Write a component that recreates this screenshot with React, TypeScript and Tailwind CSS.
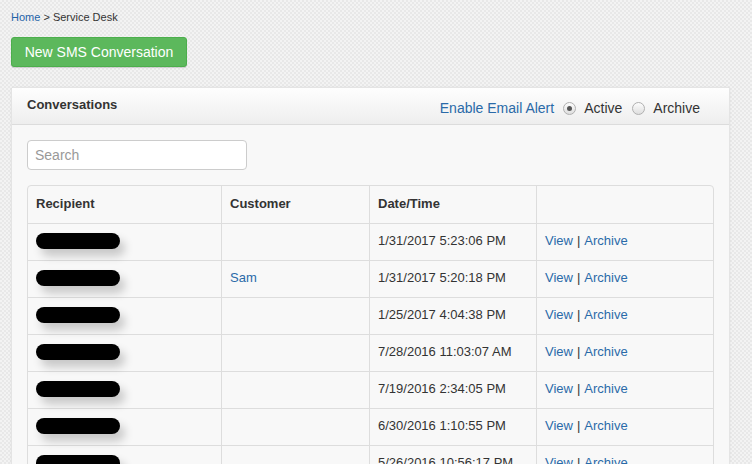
import React from "react";

const rows = [
  { customer: "", date: "1/31/2017 5:23:06 PM" },
  { customer: "Sam", date: "1/31/2017 5:20:18 PM" },
  { customer: "", date: "1/25/2017 4:04:38 PM" },
  { customer: "", date: "7/28/2016 11:03:07 AM" },
  { customer: "", date: "7/19/2016 2:34:05 PM" },
  { customer: "", date: "6/30/2016 1:10:55 PM" },
  { customer: "", date: "5/26/2016 10:56:17 PM" },
];

function Radio({ checked }: { checked?: boolean }) {
  return (
    <span className="inline-flex w-[13px] h-[13px] rounded-full border border-[#b0b0b0] bg-gradient-to-b from-[#fdfdfd] to-[#dedede] items-center justify-center">
      {checked && <span className="w-[5px] h-[5px] rounded-full bg-[#555]" />}
    </span>
  );
}

export default function App() {
  return (
    <div
      className="w-[752px] h-[464px] overflow-hidden bg-[repeating-conic-gradient(#e8e8e8_0_25%,#f3f3f3_0_50%)] bg-[length:4px_4px] text-[#333] text-[14px]"
      style={{ fontFamily: '"Liberation Sans", Arial, sans-serif' }}
    >
      <div className="pl-[11px] pt-[11px] text-[11px] leading-[13px]">
        <span className="text-[#1f63a8]">Home</span> &gt; Service Desk
      </div>
      <div className="pl-[11px] pt-[13px]">
        <button className="w-[176px] h-[30px] rounded-[3px] bg-[#5cb85c] border border-[#4cae4c] text-white text-[14px] shadow-[0_1px_1px_rgba(0,0,0,0.15)]">
          New SMS Conversation
        </button>
      </div>
      <div className="ml-[11px] mt-[20px] w-[719px] bg-[#f8f8f8] border border-[#e4e4e4] rounded-t-[3px] shadow-[0_0_2px_rgba(0,0,0,0.08)]">
        <div className="h-[37px] flex items-center justify-between pl-[15px] pr-[29px] bg-gradient-to-b from-[#fefefe] to-[#eeeeee] border-b border-[#dcdcdc]">
          <span className="font-bold text-[13px] text-[#333] -mt-[3px]">Conversations</span>
          <div className="flex items-center mt-[5px]">
            <span className="text-[#2a6aa8]">Enable Email Alert</span>
            <span className="ml-[9px] flex"><Radio checked /></span>
            <span className="ml-[8px]">Active</span>
            <span className="ml-[10px] flex"><Radio /></span>
            <span className="ml-[8px]">Archive</span>
          </div>
        </div>
        <div className="px-[15px] pt-[15px]">
          <div className="w-[220px] h-[30px] rounded-[4px] border border-[#cccccc] bg-white flex items-center px-[7px] text-[#999] text-[14px]">
            Search
          </div>
          <div className="mt-[15px] w-[687px] border border-[#dddddd] rounded-t-[4px] overflow-hidden text-[13px]">
            <div className="grid grid-cols-[194px_148px_167px_1fr] h-[37px] font-bold">
              <div className="px-[8px] pb-[2px] flex items-center border-r border-[#dddddd]">Recipient</div>
              <div className="px-[8px] pb-[2px] flex items-center border-r border-[#dddddd]">Customer</div>
              <div className="px-[8px] pb-[2px] flex items-center border-r border-[#dddddd]">Date/Time</div>
              <div />
            </div>
            {rows.map((r, i) => (
              <div key={i} className="grid grid-cols-[194px_148px_167px_1fr] h-[37px] border-t border-[#dddddd]">
                <div className="px-[8px] flex items-center border-r border-[#dddddd]">
                  <span className="block w-[84px] h-[16px] -mt-[2px] rounded-full bg-black shadow-[5px_7px_10px_rgba(0,0,0,0.2)]" />
                </div>
                <div className="px-[8px] pb-[2px] flex items-center border-r border-[#dddddd] text-[#2a6aa8]">{r.customer}</div>
                <div className="px-[8px] pb-[2px] flex items-center border-r border-[#dddddd]">{r.date}</div>
                <div className="px-[8px] pb-[2px] flex items-center">
                  <span className="text-[#2a6aa8]">View</span>
                  <span className="mx-[4px]">|</span>
                  <span className="text-[#2a6aa8]">Archive</span>
                </div>
              </div>
            ))}
          </div>
        </div>
      </div>
    </div>
  );
}
